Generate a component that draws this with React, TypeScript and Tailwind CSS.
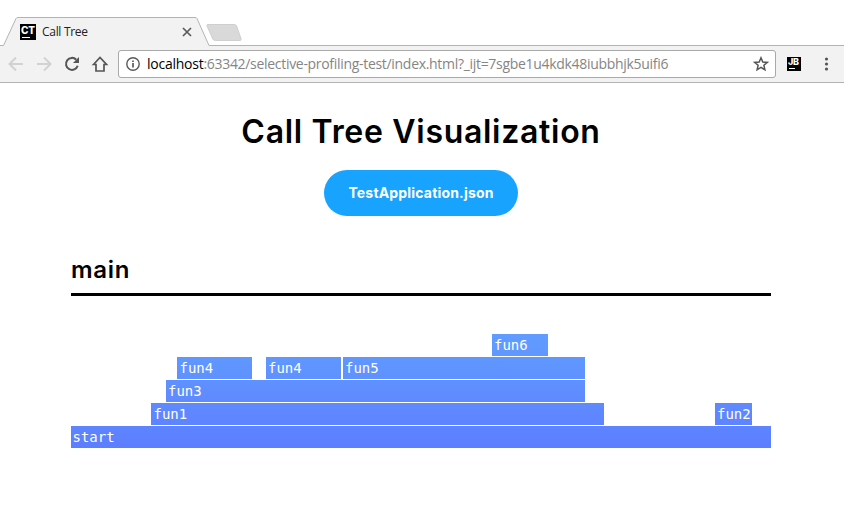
import type { ReactNode } from "react";

type Call = { name: string; gap: string; width: string; pad?: string };

const rows: { color: string; calls: Call[] }[] = [
  {
    color: "from-[#619cff] to-[#6097ff]",
    calls: [{ name: "fun6", gap: "ml-[421px]", width: "w-[56px]" }],
  },
  {
    color: "from-[#6097ff] to-[#5f91ff]",
    calls: [
      { name: "fun4", gap: "ml-[106px]", width: "w-[75px]", pad: "pl-[2.5px]" },
      { name: "fun4", gap: "ml-[14px]", width: "w-[75px]" },
      { name: "fun5", gap: "ml-[2px]", width: "w-[242px]" },
    ],
  },
  {
    color: "from-[#5f91ff] to-[#5f8aff]",
    calls: [{ name: "fun3", gap: "ml-[95px]", width: "w-[419px]" }],
  },
  {
    color: "from-[#5f8aff] to-[#5e84ff]",
    calls: [
      { name: "fun1", gap: "ml-[80px]", width: "w-[453px]", pad: "pl-[2.5px]" },
      { name: "fun2", gap: "ml-[111px]", width: "w-[37px]" },
    ],
  },
  {
    color: "from-[#5e84ff] to-[#5d7eff]",
    calls: [{ name: "start", gap: "ml-0", width: "w-[700px]", pad: "pl-[1.5px]" }],
  },
];

function Badge({ children, className }: { children: ReactNode; className: string }) {
  return (
    <span className={`flex shrink-0 flex-col bg-black pl-px font-['Inter',sans-serif] font-extrabold text-white ${className}`}>
      {children}
    </span>
  );
}

function TabStrip() {
  return (
    <div className="relative flex h-[46px] items-start pt-[17px]">
      <svg className="absolute inset-0" width="844" height="46" viewBox="0 0 844 46">
        <path d="M0 45.500H3.500L16 18.500Q16.500 17.500 18 17.500H195Q196.500 17.500 197 18.500L209 45.500H844V46H0Z" fill="#f2f2f2" />
        <path d="M0 45.500H3.500L16 18.500Q16.500 17.500 18 17.500H195Q196.500 17.500 197 18.500L209 45.500H844" fill="none" stroke="#b3b3b3" />
        <path d="M208 24.500H234.500Q236 24.500 236.600 26L241 38.500Q241.600 40.500 240 40.500H215.500Q213.500 40.500 212.800 39L207 26Q206.500 24.500 208 24.500Z" fill="#d9d9d9" stroke="#cfcfcf" />
      </svg>
      <div className="relative ml-5 flex h-[29px] w-[173px] items-center">
        <Badge className="mt-px h-4 w-4 pt-[2px] text-[10px] leading-[8px] tracking-[-0.2px]">
          CT
          <span className="mt-[3px] ml-px h-px w-2 bg-white" />
        </Badge>
        <span className="ml-[6px] mt-px font-['Open_Sans',sans-serif] text-[12px] leading-4 tracking-[-0.3px] text-[#222]">Call Tree</span>
        <svg className="ml-auto" width="12" height="12" viewBox="0 0 12 12" fill="none" stroke="#5a5a5a" strokeWidth="1.700">
          <path d="M2 2l8 8M10 2l-8 8" />
        </svg>
      </div>
    </div>
  );
}

function Toolbar() {
  return (
    <div className="flex h-[37px] items-center border-b border-[#b3b3b3] bg-[#f2f2f2]">
      <svg className="shrink-0" width="118" height="36" viewBox="0 0 118 36" fill="none">
        <g stroke="#d2d2d2" strokeWidth="2">
          <path d="M23 18H10M16 11.500L9.500 18L16 24.500" />
          <path d="M37 18H50M44 11.500L50.500 18L44 24.500" />
        </g>
        <path d="M76.300 13.700A6 6 0 1 0 77.700 19.700" stroke="#555" strokeWidth="2" />
        <path d="M79 11V17H73Z" fill="#555" />
        <path d="M93.500 18.500L100 11.500L106.500 18.500H104V25H96V18.500Z" stroke="#555" strokeWidth="1.700" />
      </svg>
      <div className="flex h-[28px] w-[658px] shrink-0 items-center rounded-[3px] border border-[#a9a9a9] bg-white pl-[7px] pr-[6px]">
        <svg width="14" height="14" viewBox="0 0 14 14" fill="none" stroke="#5a5a5a">
          <circle cx="7" cy="7" r="6.200" strokeWidth="1.400" />
          <path d="M7 6v4.500M7 3.500V5" strokeWidth="1.700" />
        </svg>
        <span className="ml-[7px] whitespace-nowrap font-['Open_Sans',sans-serif] text-[14px] leading-5 tracking-[-0.305px] text-[#858585]">
          <span className="tracking-[-0.25px] text-black">localhost</span>:63342/selective-profiling-test/index.html?_ijt=7sgbe1u4kdk48iubbhjk5uifi6
        </span>
        <svg className="ml-auto" width="16" height="16" viewBox="0 0 16 16" fill="none" stroke="#555" strokeWidth="1.500">
          <path d="M8 1.800L9.800 6L14.300 6.400L10.900 9.300L11.900 13.800L8 11.400L4.100 13.800L5.100 9.300L1.700 6.400L6.200 6Z" />
        </svg>
      </div>
      <Badge className="ml-[11px] h-[14px] w-[14px] pt-px text-[9px] leading-[8px] tracking-[-0.2px]">
        JB
        <span className="mt-[2px] ml-px h-px w-[6px] bg-white" />
      </Badge>
      <svg className="ml-[23px] shrink-0" width="5" height="14" viewBox="0 0 5 14" fill="#555">
        <circle cx="2.500" cy="2" r="1.600" />
        <circle cx="2.500" cy="7" r="1.600" />
        <circle cx="2.500" cy="12" r="1.600" />
      </svg>
    </div>
  );
}

export default function App() {
  return (
    <div className="h-[507px] w-[844px] overflow-hidden bg-white">
      <TabStrip />
      <Toolbar />
      <main className="ml-[71px] flex w-[700px] flex-col pt-[29px]">
        <h1 className="whitespace-nowrap text-center font-['Inter',sans-serif] text-[32px] leading-10 font-semibold tracking-[0.7px] text-black">
          Call Tree Visualization
        </h1>
        <button className="mt-[18px] h-[46px] w-[194px] self-center rounded-full bg-[#18a3fe] font-['Inter',sans-serif] text-[14px] leading-5 font-bold tracking-[0.18px] text-white">
          TestApplication.json
        </button>
        <h2 className="mt-[36px] h-[44px] border-b-[3px] border-black font-['Inter',sans-serif] text-[24px] leading-9 font-semibold tracking-[0.7px] text-black">
          main
        </h2>
        <section className="mt-[38px] flex flex-col gap-px font-['DejaVu_Sans_Mono',monospace] text-[14px] leading-[22px] text-white">
          {rows.map((row, i) => (
            <div key={i} className="flex h-[22px]">
              {row.calls.map((call, j) => (
                <div key={j} className={`shrink-0 bg-gradient-to-b ${call.pad ?? "pl-[2px]"} ${row.color} ${call.gap} ${call.width}`}>
                  {call.name}
                </div>
              ))}
            </div>
          ))}
        </section>
      </main>
    </div>
  );
}
